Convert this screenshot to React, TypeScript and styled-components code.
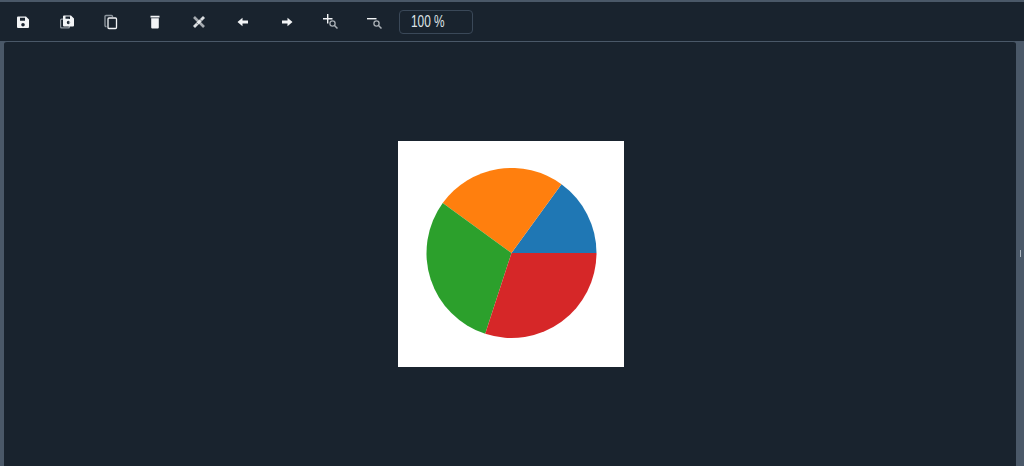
import React from 'react';
import styled, { createGlobalStyle } from 'styled-components';

const GlobalStyle = createGlobalStyle`
  html, body {
    margin: 0;
    height: 100%;
    overflow: hidden;
    background: #4a5868;
  }
  #root {
    height: 100%;
  }
`;

const Page = styled.div`
  display: flex;
  flex-direction: column;
  height: 466px;
  padding-top: 2px;
  box-sizing: border-box;
  background: #4a5868;
  font-family: 'Liberation Sans', Arial, sans-serif;
`;

const Toolbar = styled.div`
  display: flex;
  align-items: center;
  flex: 0 0 39px;
  padding-left: 1px;
  background: #19232e;
`;

const ToolButton = styled.button`
  display: flex;
  align-items: center;
  justify-content: center;
  width: 44px;
  height: 39px;
  padding: 0;
  border: 0;
  background: transparent;
  color: #f2f4f6;
`;

const ZoomInput = styled.div`
  box-sizing: border-box;
  width: 74px;
  height: 24px;
  margin: 1px 0 0 2px;
  padding-left: 11px;
  border: 1px solid #3a4858;
  border-radius: 4px;
  color: #dfe3e7;
  font-size: 16px;
  line-height: 22px;
`;

const ZoomValue = styled.span`
  display: inline-block;
  transform: scaleX(0.74);
  transform-origin: left center;
  white-space: nowrap;
`;

const Body = styled.div`
  display: flex;
  flex: 1;
  min-height: 0;
`;

const LeftGutter = styled.div`
  flex: 0 0 4px;
  background: #4a5868;
`;

const Canvas = styled.div`
  display: flex;
  flex: 1;
  align-items: center;
  justify-content: center;
  padding-left: 2px;
  border-top: 1px solid #4a5868;
  border-top-left-radius: 3px;
  border-top-right-radius: 3px;
  background: #19232e;
`;

const RightGutter = styled.div`
  display: flex;
  flex: 0 0 8px;
  align-items: center;
  justify-content: center;
  background: #4a5868;
`;

const Grip = styled.div`
  width: 1px;
  height: 7px;
  background: #a9b3bd;
`;

const Figure = styled.div`
  width: 226px;
  height: 226px;
  background: #ffffff;
`;

const Icon = ({ children }: { children: React.ReactNode }) => (
  <svg width="16" height="16" viewBox="0 0 16 16" fill="currentColor">
    {children}
  </svg>
);

const SaveIcon = () => (
  <Icon>
    <path
      fillRule="evenodd"
      d="M3 2.500h8l3 3v7.500a1 1 0 0 1-1 1H3a1 1 0 0 1-1-1V3.500a1 1 0 0 1 1-1zm2 1.200v3h5v-3zm3 5.300a1.800 1.800 0 1 0 0 3.600 1.800 1.800 0 0 0 0-3.600z"
    />
  </Icon>
);

const SaveAllIcon = () => (
  <Icon>
    <rect x="1" y="4.500" width="10" height="10" rx="1.500" fill="#8d959d" />
    <rect x="2.200" y="5.700" width="7.600" height="7.600" rx=".8" fill="#19232e" />
    <path
      fillRule="evenodd"
      d="M5 1.500h7l3 3v7a1 1 0 0 1-1 1H5a1 1 0 0 1-1-1v-9a1 1 0 0 1 1-1zm1.500 1v2.500H11V2.500zm3 4.300a1.700 1.700 0 1 0 0 3.400 1.700 1.700 0 0 0 0-3.400z"
    />
  </Icon>
);

const CopyIcon = () => (
  <Icon>
    <path fill="none" stroke="#8d959d" strokeWidth="1.400" d="M3.500 12.500h-.5a1 1 0 0 1-1-1V2.500a1 1 0 0 1 1-1h5.500a1 1 0 0 1 1 1V3" />
    <rect x="5" y="4" width="8.500" height="10.500" rx="1" fill="none" stroke="currentColor" strokeWidth="1.300" />
  </Icon>
);

const TrashIcon = () => (
  <Icon>
    <path d="M3.500 1.800h9v1.700h-9zM4.200 4.300h7.600v9.200a1 1 0 0 1-1 1H5.200a1 1 0 0 1-1-1z" />
  </Icon>
);

const ToolsIcon = () => (
  <Icon>
    <g stroke="currentColor" fill="none">
      <path d="M3 3l10 10" strokeWidth="2.600" strokeOpacity=".65" />
      <path d="M13 3L3 13" strokeWidth="2.800" strokeOpacity=".9" />
      <path d="M5.500 8.800l1.500 1.500M9 5.300l1.500 1.500" stroke="#19232e" strokeWidth=".6" />
    </g>
  </Icon>
);

const ArrowLeftIcon = () => (
  <Icon>
    <path d="M2.500 8l5-4.300v2.700H13v3.200H7.500v2.700z" />
  </Icon>
);

const ArrowRightIcon = () => (
  <Icon>
    <path d="M13.500 8l-5-4.300v2.700H3v3.200h5.500v2.700z" />
  </Icon>
);

const ZoomInIcon = () => (
  <Icon>
    <path d="M4 0h1.400v4H9.500v1.400H5.400v4.100H4V5.400H0V4h4z" />
    <circle cx="9.500" cy="9.500" r="2.600" fill="none" stroke="#aab0b6" strokeWidth="1.300" />
    <path d="M11.500 11.500l3 3" stroke="#aab0b6" strokeWidth="1.500" />
  </Icon>
);

const ZoomOutIcon = () => (
  <Icon>
    <path d="M0 4h9.500v1.400H0z" />
    <circle cx="9.500" cy="9.500" r="2.600" fill="none" stroke="#aab0b6" strokeWidth="1.300" />
    <path d="M11.500 11.500l3 3" stroke="#aab0b6" strokeWidth="1.500" />
  </Icon>
);

const tools = [
  { name: 'save', icon: <SaveIcon /> },
  { name: 'save-all', icon: <SaveAllIcon /> },
  { name: 'copy', icon: <CopyIcon /> },
  { name: 'delete', icon: <TrashIcon /> },
  { name: 'tools', icon: <ToolsIcon /> },
  { name: 'back', icon: <ArrowLeftIcon /> },
  { name: 'forward', icon: <ArrowRightIcon /> },
  { name: 'zoom-in', icon: <ZoomInIcon /> },
  { name: 'zoom-out', icon: <ZoomOutIcon /> },
];

const slices = [
  { color: '#1f77b4', from: 0, to: 54 },
  { color: '#ff7f0e', from: 54, to: 144 },
  { color: '#2ca02c', from: 144, to: 252 },
  { color: '#d62728', from: 252, to: 360 },
];

// angles run counter-clockwise from 3 o'clock, as in the plot
const slicePath = (from: number, to: number) => {
  const cx = 113.5;
  const cy = 112;
  const r = 85;
  const point = (deg: number) => {
    const rad = (deg * Math.PI) / 180;
    return `${(cx + r * Math.cos(rad)).toFixed(2)} ${(cy - r * Math.sin(rad)).toFixed(2)}`;
  };
  return `M${cx} ${cy}L${point(from)}A${r} ${r} 0 0 0 ${point(to)}Z`;
};

function App() {
  return (
    <Page>
      <GlobalStyle />
      <Toolbar>
        {tools.map((tool) => (
          <ToolButton key={tool.name} aria-label={tool.name}>
            {tool.icon}
          </ToolButton>
        ))}
        <ZoomInput>
          <ZoomValue>100 %</ZoomValue>
        </ZoomInput>
      </Toolbar>
      <Body>
        <LeftGutter />
        <Canvas>
          <Figure>
            <svg width="226" height="226" viewBox="0 0 226 226">
              {slices.map((slice) => (
                <path key={slice.color} d={slicePath(slice.from, slice.to)} fill={slice.color} />
              ))}
            </svg>
          </Figure>
        </Canvas>
        <RightGutter>
          <Grip />
        </RightGutter>
      </Body>
    </Page>
  );
}

export default App;
